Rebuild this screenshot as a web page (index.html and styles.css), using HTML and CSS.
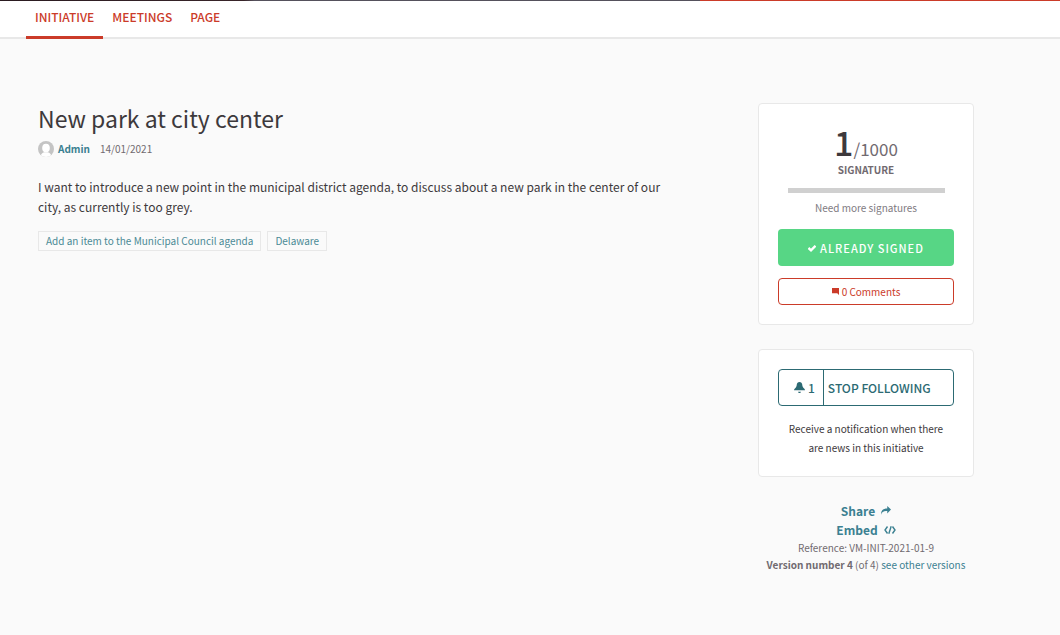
FILE: index.html
```html
<!DOCTYPE html>
<html lang="en">
<head>
<meta charset="utf-8">
<meta name="viewport" content="width=device-width, initial-scale=1">
<title>New park at city center</title>
<link rel="stylesheet" href="styles.css">
</head>
<body>
<header class="process-header">
  <nav class="tabs" aria-label="Initiative">
    <a class="tab tab-active" href="#initiative" aria-current="page">INITIATIVE</a>
    <a class="tab" href="#meetings">MEETINGS</a>
    <a class="tab" href="#page">PAGE</a>
  </nav>
</header>
<main class="wrapper">
  <article class="content">
    <h1 class="title">New park at city center</h1>
    <div class="author">
      <svg class="avatar" viewBox="0 0 16 16" aria-hidden="true"><defs><clipPath id="disc"><circle cx="8" cy="8" r="8"/></clipPath></defs><g clip-path="url(#disc)"><rect width="16" height="16" fill="#c4c4c4"/><ellipse cx="8" cy="7" rx="3.8" ry="4.300" fill="#fff"/><path d="M2.500 16c.2-3 1.800-4.300 3.700-4.800h3.600c1.900.5 3.500 1.800 3.700 4.800z" fill="#fff"/></g></svg>
      <a class="author-name" href="#admin">Admin</a>
      <time class="date" datetime="2021-01-14">14/01/2021</time>
    </div>
    <p class="description">I want to introduce a new point in the municipal district agenda, to discuss about a new park in the center of our city, as currently is too grey.</p>
    <ul class="tags">
      <li><a class="tag" href="#agenda">Add an item to the Municipal Council agenda</a></li>
      <li><a class="tag" href="#delaware">Delaware</a></li>
    </ul>
  </article>
  <aside class="sidebar">
    <section class="card">
      <div class="votes"><span class="votes-count">1</span><span class="votes-total">/1000</span></div>
      <div class="votes-label">SIGNATURE</div>
      <div class="progress" role="progressbar" aria-label="Signatures" aria-valuenow="1" aria-valuemin="0" aria-valuemax="1000"></div>
      <p class="votes-status">Need more signatures</p>
      <button class="button signed" type="button"><svg class="icon-check" viewBox="0 0 8 8" aria-hidden="true"><path d="M.5 4 3 6.300 7.500 1.800"/></svg><span>ALREADY SIGNED</span></button>
      <a class="button comments" href="#comments"><svg class="icon-comment" viewBox="0 0 8 8" aria-hidden="true"><path d="M0 0v6h6l2 2v-8z"/></svg><span>0 Comments</span></a>
    </section>
    <section class="card">
      <button class="button follow" type="button"><span class="follow-count"><svg class="icon-bell" viewBox="0 0 8 8" aria-hidden="true"><path d="M4 0c-1.100 0-2 .9-2 2 0 1.040-.520 1.980-1.340 2.660-.410.340-.660.820-.660 1.340h8c0-.520-.240-1-.660-1.340-.820-.680-1.340-1.620-1.340-2.660 0-1.100-.890-2-2-2zm-1 7c0 .550.450 1 1 1s1-.450 1-1h-2z"/></svg>1</span><span class="follow-label">STOP FOLLOWING</span></button>
      <p class="follow-help">Receive a notification when there are news in this initiative</p>
    </section>
    <div class="links">
      <button class="link-button" type="button">Share<svg class="icon-share" viewBox="0 0 8 8" aria-hidden="true"><path d="M5 0v2c-4 0-5 2.050-5 5 .520-1.980 2-3 4-3h1v2l3-3.160-3-2.840z"/></svg></button>
      <button class="link-button" type="button">Embed<svg class="icon-code" viewBox="0 0 12 8" aria-hidden="true"><path d="M3.500 .5 1 4l2.500 3.500M8.500 .5 11 4 8.500 7.500M7.200 .3 4.800 7.700"/></svg></button>
      <p class="meta">Reference: VM-INIT-2021-01-9</p>
      <p class="meta"><strong>Version number 4</strong> (of 4) <a class="version-link" href="#versions">see other versions</a></p>
    </div>
  </aside>
</main>
</body>
</html>
```
FILE: styles.css
```css
*, *::before, *::after { box-sizing: border-box; }

body {
  margin: 0;
  background: #fafafa;
  color: #3d393c;
  font-family: "Noto Sans CJK SC", "Noto Sans", sans-serif;
  font-size: 12px;
  line-height: 20px;
}

a { color: inherit; text-decoration: none; }
h1, p, ul { margin: 0; padding: 0; }
ul { list-style: none; }
button { font: inherit; color: inherit; background: none; border: 0; padding: 0; cursor: pointer; }
svg { flex: none; fill: currentColor; }

.process-header {
  background: linear-gradient(90deg, #2a1b20 0, #382429 23%, #55515c 24%, #55515c 66%, #cb3b29 66%) top / 100% 1px no-repeat #fff;
  border-bottom: 2px solid #e8e8e8;
  padding: 1px 26px 0;
}
.tabs { display: flex; margin-bottom: -2px; }
.tab {
  padding: 6px 9px 9px;
  border-bottom: 3px solid transparent;
  color: #cb3b29;
  font-weight: 500;
}
.tab-active { border-color: #cb3b29; }

.wrapper {
  display: grid;
  grid-template-columns: minmax(0, 1fr) 216px;
  gap: 80px;
  padding: 64px 86px 56px 38px;
}

.title { font-size: 23px; line-height: 30px; font-weight: 400; }
.author { display: flex; align-items: center; gap: 4px; margin-top: 6px; font-size: 10px; }
.avatar { width: 16px; height: 16px; }
.author-name { color: #3b8091; font-weight: 700; }
.date { margin-left: 6px; color: #716a70; }
.description { margin-top: 18px; max-width: 632px; }
.tags { display: flex; flex-wrap: wrap; gap: 6px; margin-top: 14px; }
.tag {
  display: block;
  padding: 0 7px;
  border: 1px solid #e8e8e8;
  color: #4b8a96;
  font-size: 10px;
  line-height: 18px;
}

.sidebar { text-align: center; font-size: 10px; }
.card {
  margin-bottom: 24px;
  padding: 19px;
  background: #fff;
  border: 1px solid #e8e8e8;
  border-radius: 4px;
}
.votes { display: flex; align-items: baseline; justify-content: center; color: #716a70; }
.votes-count { font-size: 34px; line-height: 38px; font-weight: 500; color: #3d393c; }
.votes-total { font-size: 17px; line-height: 20px; }
.votes-label { line-height: 18px; font-weight: 700; color: #716a70; }
.progress { height: 5px; margin: 9px 9px 0 10px; background: #d0d0d0; }
.votes-status { margin: 5px 0 11px; color: #807a7f; }

.button {
  display: flex;
  width: 100%;
  align-items: center;
  justify-content: center;
  border-radius: 4px;
}
.signed {
  height: 37px;
  gap: 4px;
  background: #57d685;
  color: #fff;
  font-size: 11px;
  font-weight: 500;
  letter-spacing: 1px;
}
.icon-check { width: 8px; height: 8px; fill: none; stroke: currentColor; stroke-width: 2.4; }
.comments {
  height: 27px;
  gap: 3px;
  margin-top: 12px;
  border: 1px solid #cb3b29;
  color: #cb3b29;
}
.icon-comment { width: 7px; height: 7px; }
.follow {
  height: 37px;
  align-items: stretch;
  justify-content: flex-start;
  border: 1px solid #2c6a73;
  color: #2c6a73;
  font-size: 12px;
  font-weight: 500;
  line-height: 35px;
}
.follow-count {
  display: flex;
  align-items: center;
  gap: 3px;
  padding: 0 8px 0 15px;
  border-right: 1px solid #2c6a73;
}
.icon-bell { width: 11px; height: 11px; }
.follow-label { padding-left: 4px; }
.follow-help { margin-top: 13px; padding: 0 4px; line-height: 19px; }

.links { display: flex; flex-direction: column; align-items: center; color: #716a70; }
.link-button {
  display: flex;
  align-items: center;
  gap: 6px;
  color: #3b8091;
  font-size: 12px;
  font-weight: 700;
  line-height: 19px;
}
.icon-share { width: 10px; height: 10px; }
.icon-code { width: 12px; height: 8px; fill: none; stroke: currentColor; stroke-width: 1.4; }
.meta { line-height: 17px; white-space: nowrap; }
.version-link { color: #3b8091; }
```
